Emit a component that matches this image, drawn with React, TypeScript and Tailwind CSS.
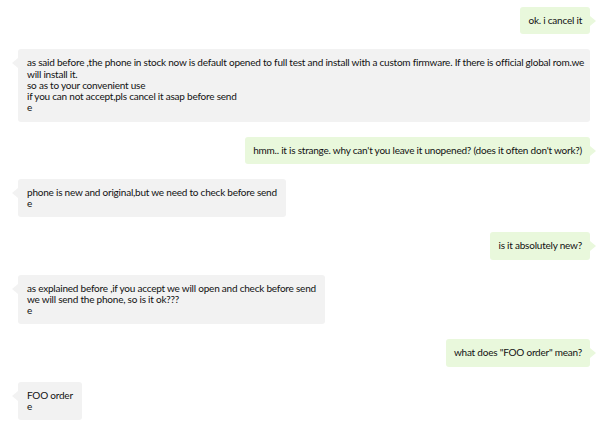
import React from "react";

type Msg = { side: "l" | "r"; text: string; wide?: boolean };

const msgs: Msg[] = [
  { side: "r", text: "ok. i cancel it" },
  {
    side: "l",
    wide: true,
    text:
      "as said before ,the phone in stock now is default opened to full test and install with a custom firmware. If there is official global rom.we\nwill install it.\nso as to your convenient use\nif you can not accept,pls cancel it asap before send\ne",
  },
  { side: "r", text: "hmm.. it is strange. why can't you leave it unopened? (does it often don't work?)" },
  { side: "l", text: "phone is new and original,but we need to check before send\ne" },
  { side: "r", text: "is it absolutely new?" },
  {
    side: "l",
    text: "as explained before ,if you accept we will open and check before send\nwe will send the phone, so is it ok???\ne",
  },
  { side: "r", text: "what does \"FOO order\" mean?" },
  { side: "l", text: "FOO order\ne" },
];

function Bubble({ m }: { m: Msg }) {
  if (m.side === "r") {
    return (
      <div className="flex justify-end">
        <div className="relative rounded-[3px] bg-[#e9f8dc] px-[8px] py-[8px] whitespace-pre">
          {m.text}
          <span className="absolute right-[-6px] top-[9px] h-0 w-0 border-y-[5px] border-l-[6px] border-y-transparent border-l-[#e9f8dc]" />
        </div>
      </div>
    );
  }
  return (
    <div className="flex justify-start">
      <div
        className={
          m.wide
            ? "relative w-[572px] rounded-[3px] bg-[#f2f2f2] px-[9px] py-[8px] whitespace-pre"
            : "relative rounded-[3px] bg-[#f2f2f2] px-[9px] py-[8px] whitespace-pre"
        }
      >
        {m.text}
        <span className="absolute left-[-6px] top-[9px] h-0 w-0 border-y-[5px] border-r-[6px] border-y-transparent border-r-[#f2f2f2]" />
      </div>
    </div>
  );
}

export default function App() {
  return (
    <div
      className="h-[425px] w-[600px] overflow-hidden bg-white pl-[18px] pr-[10px] pt-[7px] text-[10px] leading-[11.25px] tracking-[-0.22px] text-[#111]"
      style={{ fontFamily: "Lato, 'Liberation Sans', sans-serif" }}
    >
      <div className="flex flex-col gap-[15px]">
        {msgs.map((m, i) => (
          <Bubble key={i} m={m} />
        ))}
      </div>
    </div>
  );
}
